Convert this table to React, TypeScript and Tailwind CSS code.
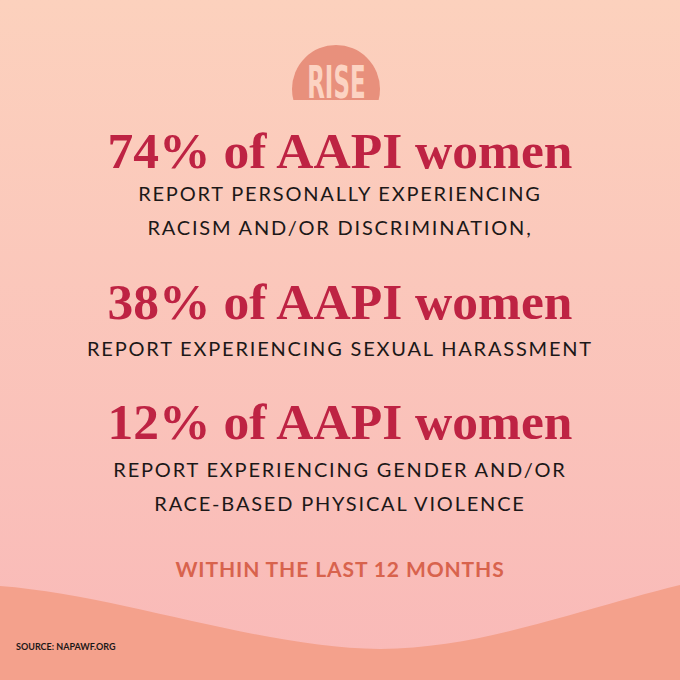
export default function App() {
  const stats = [
    {
      figure: "74% of AAPI women",
      lines: ["REPORT PERSONALLY EXPERIENCING", "RACISM AND/OR DISCRIMINATION,"],
      gap: "mt-[25px]",
      bodyGap: "mt-0",
    },
    {
      figure: "38% of AAPI women",
      lines: ["REPORT EXPERIENCING SEXUAL HARASSMENT"],
      gap: "mt-[32px]",
      bodyGap: "mt-[4px]",
    },
    {
      figure: "12% of AAPI women",
      lines: ["REPORT EXPERIENCING GENDER AND/OR", "RACE-BASED PHYSICAL VIOLENCE"],
      gap: "mt-[31px]",
      bodyGap: "mt-[5px]",
    },
  ];

  return (
    <div className="relative h-[680px] w-[680px] overflow-hidden bg-linear-to-b from-[#fcd1bd] to-[#f9b9b8]">
      {/* wave along the bottom */}
      <svg
        className="absolute inset-0"
        width="680"
        height="680"
        viewBox="0 0 680 680"
      >
        <path
          d="M0 586 C120 595 260 648 380 649 C480 648 560 615 680 585 L680 680 L0 680 Z"
          fill="#f4a18c"
        />
      </svg>

      <div className="relative flex flex-col items-center">
        {/* RISE logo: circle cut flat at the bottom */}
        <div className="mr-[8px] mt-[45px] flex h-[55px] w-[88px] justify-center overflow-hidden">
          <div className="flex h-[88px] w-[88px] shrink-0 justify-center rounded-full bg-[#e8907c]">
            <span className="mt-[22px] block h-[32px] scale-x-[0.58] font-['Liberation_Sans_Narrow','DejaVu_Sans_Condensed',sans-serif] text-[44px] leading-[32px] font-bold text-[#fcd3c2]">
              RISE
            </span>
          </div>
        </div>

        {stats.map((s) => (
          <div key={s.figure} className="flex flex-col items-center">
            <h2
              className={`${s.gap} font-['Liberation_Serif',serif] text-[51.5px] leading-[51px] font-bold text-[#be2343]`}
            >
              {s.figure}
            </h2>
            <div
              className={`${s.bodyGap} text-center font-['Lato',sans-serif] text-[20px] leading-[34px] tracking-[1.8px] text-[#1c1818]`}
            >
              {s.lines.map((l) => (
                <p key={l}>{l}</p>
              ))}
            </div>
          </div>
        ))}

        <p className="mt-[32px] font-['Lato',sans-serif] text-[21px] leading-[34px] tracking-[0.9px] font-bold text-[#d8634d]">
          WITHIN THE LAST 12 MONTHS
        </p>

        <p className="mt-[55px] ml-[16px] self-start font-['Lato',sans-serif] text-[9px] leading-[12px] font-bold text-[#1c1818]">
          SOURCE: NAPAWF.ORG
        </p>
      </div>
    </div>
  );
}
